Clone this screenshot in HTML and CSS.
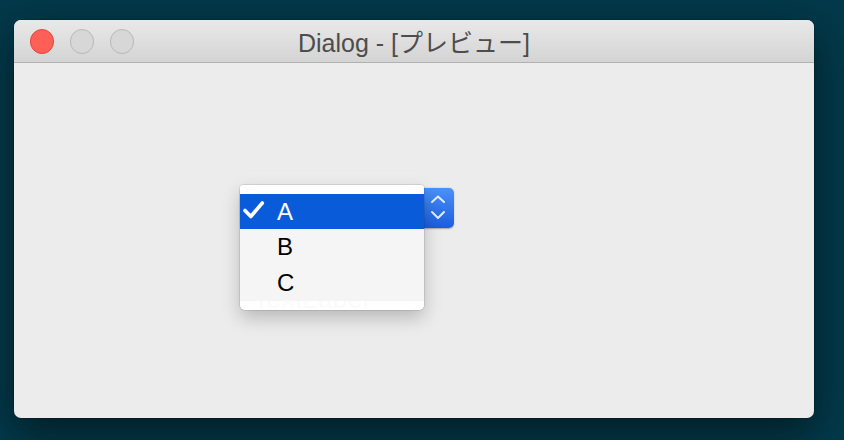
FILE: index.html
```html
<!DOCTYPE html>
<html lang="ja">
<head>
<meta charset="utf-8">
<title>Dialog - [プレビュー]</title>
<link rel="stylesheet" href="styles.css">
</head>
<body>
  <div class="window">
    <div class="titlebar">
      <div class="lights">
        <span class="light close"></span>
        <span class="light"></span>
        <span class="light"></span>
      </div>
      <div class="title">Dialog - [プレビュー]</div>
      <div></div>
    </div>
    <div class="content">
      <div class="combo">
        <div class="combo-face">
          <span class="combo-text">A</span>
          <span class="stepper">
            <svg width="31" height="40" viewBox="0 0 31 40">
              <path d="M9 14 L15 8.5 L21 14" fill="none" stroke="#e4edfc" stroke-width="2" stroke-linecap="round" stroke-linejoin="round"/>
              <path d="M9 24 L15 30 L21 24" fill="none" stroke="#e4edfc" stroke-width="2" stroke-linecap="round" stroke-linejoin="round"/>
            </svg>
          </span>
        </div>
        <ul class="menu">
          <li class="item selected">
            <span class="check">
              <svg width="37" height="35" viewBox="0 0 37 35">
                <path d="M5 16.5 L10.8 22.5 L22.3 9" fill="none" stroke="#fff" stroke-width="3.6" stroke-linecap="round" stroke-linejoin="round"/>
              </svg>
            </span>
            <span class="label">A</span>
          </li>
          <li class="item"><span class="check"></span><span class="label">B</span></li>
          <li class="item"><span class="check"></span><span class="label">C</span></li>
        </ul>
      </div>
      <div class="text-label">TextLabel</div>
    </div>
  </div>
</body>
</html>
```

FILE: styles.css
```css
html, body {
  margin: 0;
  height: 100%;
}

body {
  background: #03394a;
  padding: 20px 0 0 14px;
  box-sizing: border-box;
  font-family: "Liberation Sans", "Noto Sans CJK JP", sans-serif;
  overflow: hidden;
}

.window {
  width: 800px;
  height: 398px;
  border-radius: 7px;
  background: #ececec;
  display: flex;
  flex-direction: column;
  overflow: hidden;
  box-shadow: 0 14px 40px rgba(0, 0, 0, 0.5), 0 0 0 0.5px rgba(0, 0, 0, 0.25);
}

/* title bar */
.titlebar {
  height: 42px;
  flex: none;
  display: grid;
  grid-template-columns: 1fr auto 1fr;
  align-items: center;
  background: linear-gradient(#e9e9e9, #d4d4d4);
  border-bottom: 1px solid #b1b1b1;
}

.lights {
  display: flex;
  gap: 15.5px;
  padding-left: 15.5px;
  align-items: center;
  margin-top: 1px;
}

.light {
  width: 24.5px;
  height: 24.5px;
  box-sizing: border-box;
  border-radius: 50%;
  background: #d7d7d7;
  border: 1px solid #b8b8b8;
}

.light.close {
  background: #fe5f57;
  border-color: #e2463f;
}

.title {
  font-size: 25px;
  line-height: 30px;
  color: #4d4d4d;
  padding-top: 3px;
  white-space: nowrap;
}

/* dialog body */
.content {
  flex: 1;
  padding: 125px 0 0 226px;
  display: flex;
  flex-direction: column;
  align-items: flex-start;
}

.combo {
  position: relative;
  width: 214px;
  height: 40px;
}

.combo-face {
  height: 40px;
  display: flex;
  border-radius: 5px;
  background: #ffffff;
  box-shadow: 0 0.5px 1.5px rgba(0, 0, 0, 0.3);
}

.combo-text {
  flex: 1;
  font-size: 24px;
  line-height: 40px;
  padding-left: 12px;
}

.stepper {
  width: 31px;
  height: 40px;
  border-radius: 0 5px 5px 0;
  background: linear-gradient(#4b91f8, #1a5ddf);
}

.stepper svg {
  display: block;
}

.text-label {
  margin: 58px 0 0 13px;
  font-size: 27px;
  line-height: 27px;
  color: #000;
}

/* popup menu over the combo box */
.menu {
  position: absolute;
  left: 0;
  top: -3px;
  width: 184px;
  margin: 0;
  padding: 9px 0 9px;
  list-style: none;
  background: rgba(255, 255, 255, 0.98);
  border-radius: 3px 3px 5px 5px;
  box-shadow: 0 8px 18px rgba(0, 0, 0, 0.22), 0 0 0 0.5px rgba(0, 0, 0, 0.18);
  z-index: 2;
}

.item {
  display: flex;
  height: 36px;
  align-items: center;
  background: rgba(245, 245, 245, 0.965);
  font-size: 24px;
  line-height: 36px;
  color: #000;
}

.item.selected {
  height: 35px;
  background: #0a5bd9;
  color: #fff;
}

.check {
  width: 37px;
  height: 35px;
  flex: none;
}

.check svg {
  display: block;
}
```
